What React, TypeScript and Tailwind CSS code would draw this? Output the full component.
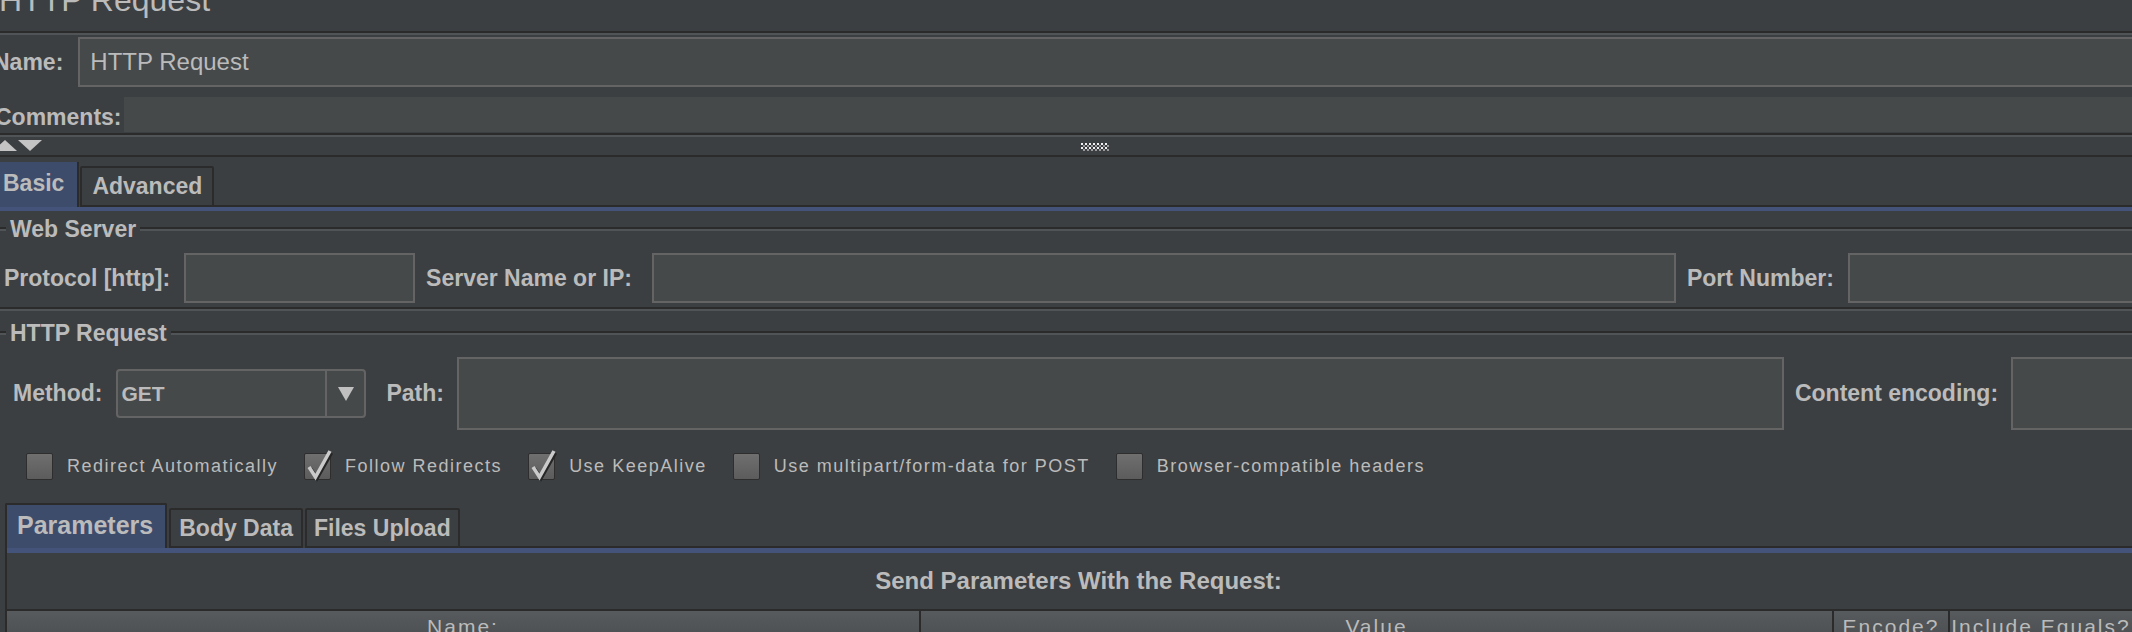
const Etched = () => (
  <div className="flex flex-col">
    <div className="h-[2px] bg-[#2b2b2b]" />
    <div className="h-[2px] bg-[#505456]" />
  </div>
)

const GroupTitle = ({ title }: { title: string }) => (
  <div className="flex h-[4px] items-center">
    <div className="w-[6px]">
      <Etched />
    </div>
    <span className="whitespace-nowrap px-[4px] text-[23px] font-bold leading-none">{title}</span>
    <div className="flex-1">
      <Etched />
    </div>
  </div>
)

const Label = ({ children, className = '' }: { children: React.ReactNode; className?: string }) => (
  <span className={`whitespace-nowrap font-bold leading-none ${className || 'text-[23px]'}`}>{children}</span>
)

const CheckBox = ({ label, checked }: { label: string; checked?: boolean }) => (
  <div className="flex items-center">
    <div className="relative h-[27px] w-[27px] rounded-[2px] border border-[#2e2e2e] bg-gradient-to-b from-[#6f6f6f] to-[#5c5c5c]">
      {checked && (
        <svg className="absolute left-[-2px] top-[-5px]" width="32" height="33" viewBox="0 0 32 33">
          <path d="M7.5 19.5 L14 29.5 L28.5 4" fill="none" stroke="#262626" strokeWidth="3.5" />
          <path d="M6 18 L12.5 28 L27 2" fill="none" stroke="#cacaca" strokeWidth="3.5" />
        </svg>
      )}
    </div>
    <span className="ml-[14px] whitespace-nowrap text-[18px] leading-none tracking-[1.5px]">{label}</span>
  </div>
)

const Grip = () => {
  const dots = []
  for (let i = 0; i < 14; i++) {
    for (let j = 0; j < 4; j++) {
      if ((i + j) % 2 === 0) dots.push(<rect key={`${i}-${j}`} x={i * 2} y={j * 2} width="2" height="2" fill={j % 2 ? '#9a9a9a' : '#f0f0f0'} />)
    }
  }
  return (
    <svg width="28" height="8" viewBox="0 0 28 8">
      {dots}
    </svg>
  )
}

export default function App() {
  return (
    <div className="h-[632px] w-[2132px] overflow-hidden bg-[#3c3f41] font-['Liberation_Sans',Arial,sans-serif] text-[#bbbbbb]">
      <div className="flex w-[2150px] flex-col">
        {/* title */}
        <div className="h-[31px] overflow-hidden">
          <div className="ml-[-1px] mt-[-16px] whitespace-nowrap text-[32px] leading-[32px]">HTTP Request</div>
        </div>
        <Etched />
        <div className="h-[2px]" />

        {/* name */}
        <div className="ml-[-7px] flex h-[50px] items-center">
          <Label>Name:</Label>
          <div className="ml-[15px] flex h-full flex-1 items-center border-2 border-[#646464] bg-[#45494a] pl-[10px] text-[24px]">
            HTTP Request
          </div>
        </div>
        <div className="h-[10px]" />

        {/* comments */}
        <div className="ml-[-5px] flex h-[36px] items-start">
          <Label className="mt-[9px] text-[23px]">Comments:</Label>
          <div className="ml-[2px] h-[35px] flex-1 bg-[#45494a]" />
        </div>
        <Etched />

        {/* splitter */}
        <div className="flex h-[18px] items-start">
          <svg className="ml-[-7px] mt-[3px]" width="50" height="11" viewBox="0 0 50 11">
            <polygon points="0,11 24,11 12,0" fill="#c4c4c4" />
            <polygon points="25,0 49,0 37,11" fill="#c4c4c4" />
          </svg>
          <div className="ml-[1038px] mt-[6px]">
            <Grip />
          </div>
        </div>
        <div className="h-[2px] bg-[#2b2b2b]" />
        <div className="h-[5px]" />

        {/* basic / advanced tabs */}
        <div className="ml-[-8px] flex h-[45px] items-end">
          <div className="flex h-[45px] items-center border-r-2 border-[#2b2b2b] bg-[#3e4c6c] pb-[3px] pl-[11px] pr-[13px]">
            <Label>Basic</Label>
          </div>
          <div className="ml-[1px] flex h-[41px] items-center rounded-t-[2px] border-2 border-[#2b2b2b] px-[10px]">
            <Label>Advanced</Label>
          </div>
          <div className="h-[2px] flex-1 bg-[#2b2b2b]" />
        </div>
        <div className="h-[4px] bg-[#43537a]" />
        <div className="h-[16px]" />

        {/* web server */}
        <GroupTitle title="Web Server" />
        <div className="h-[22px]" />
        <div className="flex h-[50px] items-center pl-[4px]">
          <Label>Protocol [http]:</Label>
          <div className="ml-[14px] h-full w-[231px] border-2 border-[#646464] bg-[#45494a]" />
          <Label className="ml-[11px] text-[23px]">Server Name or IP:</Label>
          <div className="ml-[20px] h-full w-[1024px] border-2 border-[#646464] bg-[#45494a]" />
          <Label className="ml-[11px] text-[23px]">Port Number:</Label>
          <div className="ml-[14px] h-full flex-1 border-2 border-[#646464] bg-[#45494a]" />
        </div>
        <div className="h-[4px]" />
        <Etched />
        <div className="h-[20px]" />

        {/* http request */}
        <GroupTitle title="HTTP Request" />
        <div className="h-[22px]" />
        <div className="flex h-[73px] items-center pl-[13px]">
          <Label>Method:</Label>
          <div className="ml-[14px] flex h-[49px] w-[250px] rounded-[4px] border-2 border-[#646464] bg-[#45494a]">
            <div className="flex flex-1 items-center pl-[3px] text-[21px] font-bold">GET</div>
            <div className="flex w-[39px] items-center justify-center border-l-2 border-[#646464]">
              <svg width="16" height="14" viewBox="0 0 16 14">
                <polygon points="0,0 16,0 8,14" fill="#c0c0c0" />
              </svg>
            </div>
          </div>
          <Label className="ml-[20px] text-[23px]">Path:</Label>
          <div className="ml-[13px] h-full w-[1327px] border-2 border-[#646464] bg-[#45494a]" />
          <Label className="ml-[11px] text-[23px]">Content encoding:</Label>
          <div className="ml-[13px] h-full flex-1 border-2 border-[#646464] bg-[#45494a]" />
        </div>
        <div className="h-[22px]" />

        {/* checkboxes */}
        <div className="flex h-[28px] items-center gap-[26px] pl-[26px]">
          <CheckBox label="Redirect Automatically" />
          <CheckBox label="Follow Redirects" checked />
          <CheckBox label="Use KeepAlive" checked />
          <CheckBox label="Use multipart/form-data for POST" />
          <CheckBox label="Browser-compatible headers" />
        </div>
        <div className="h-[23px]" />

        {/* parameters panel */}
        <div className="ml-[5px] flex flex-col">
          <div className="flex h-[45px] items-end">
            <div className="flex h-[45px] items-center rounded-t-[2px] border-2 border-b-0 border-[#2b2b2b] bg-[#3e4c6c] pb-[2px] pl-[10px] pr-[12px]">
              <Label className="text-[25px]">Parameters</Label>
            </div>
            <div className="ml-[2px] flex h-[40px] items-center rounded-t-[2px] border-2 border-[#2b2b2b] px-[8px]">
              <Label>Body Data</Label>
            </div>
            <div className="ml-[2px] flex h-[40px] items-center rounded-t-[2px] border-2 border-[#2b2b2b] px-[7px]">
              <Label>Files Upload</Label>
            </div>
            <div className="h-[2px] flex-1 bg-[#2b2b2b]" />
          </div>
          <div className="flex flex-col border-l-2 border-[#2b2b2b]">
            <div className="h-[5px] bg-[#43537a]" />
            <div className="flex h-[56px] items-center justify-center">
              <Label className="text-[24px]">Send Parameters With the Request:</Label>
            </div>
            <div className="h-[2px] bg-[#2b2b2b]" />
            <div className="flex h-[30px] bg-gradient-to-b from-[#575b5e] to-[#4a4e50] text-[21px] leading-none tracking-[2px]">
              <div className="flex w-[912px] items-center justify-center">Name:</div>
              <div className="w-[2px] bg-[#2b2b2b]" />
              <div className="flex w-[911px] items-center justify-center">Value</div>
              <div className="w-[2px] bg-[#2b2b2b]" />
              <div className="flex w-[114px] items-center justify-center">Encode?</div>
              <div className="w-[2px] bg-[#2b2b2b]" />
              <div className="flex w-[182px] items-center justify-center whitespace-nowrap">Include Equals?</div>
            </div>
          </div>
        </div>
      </div>
    </div>
  )
}
